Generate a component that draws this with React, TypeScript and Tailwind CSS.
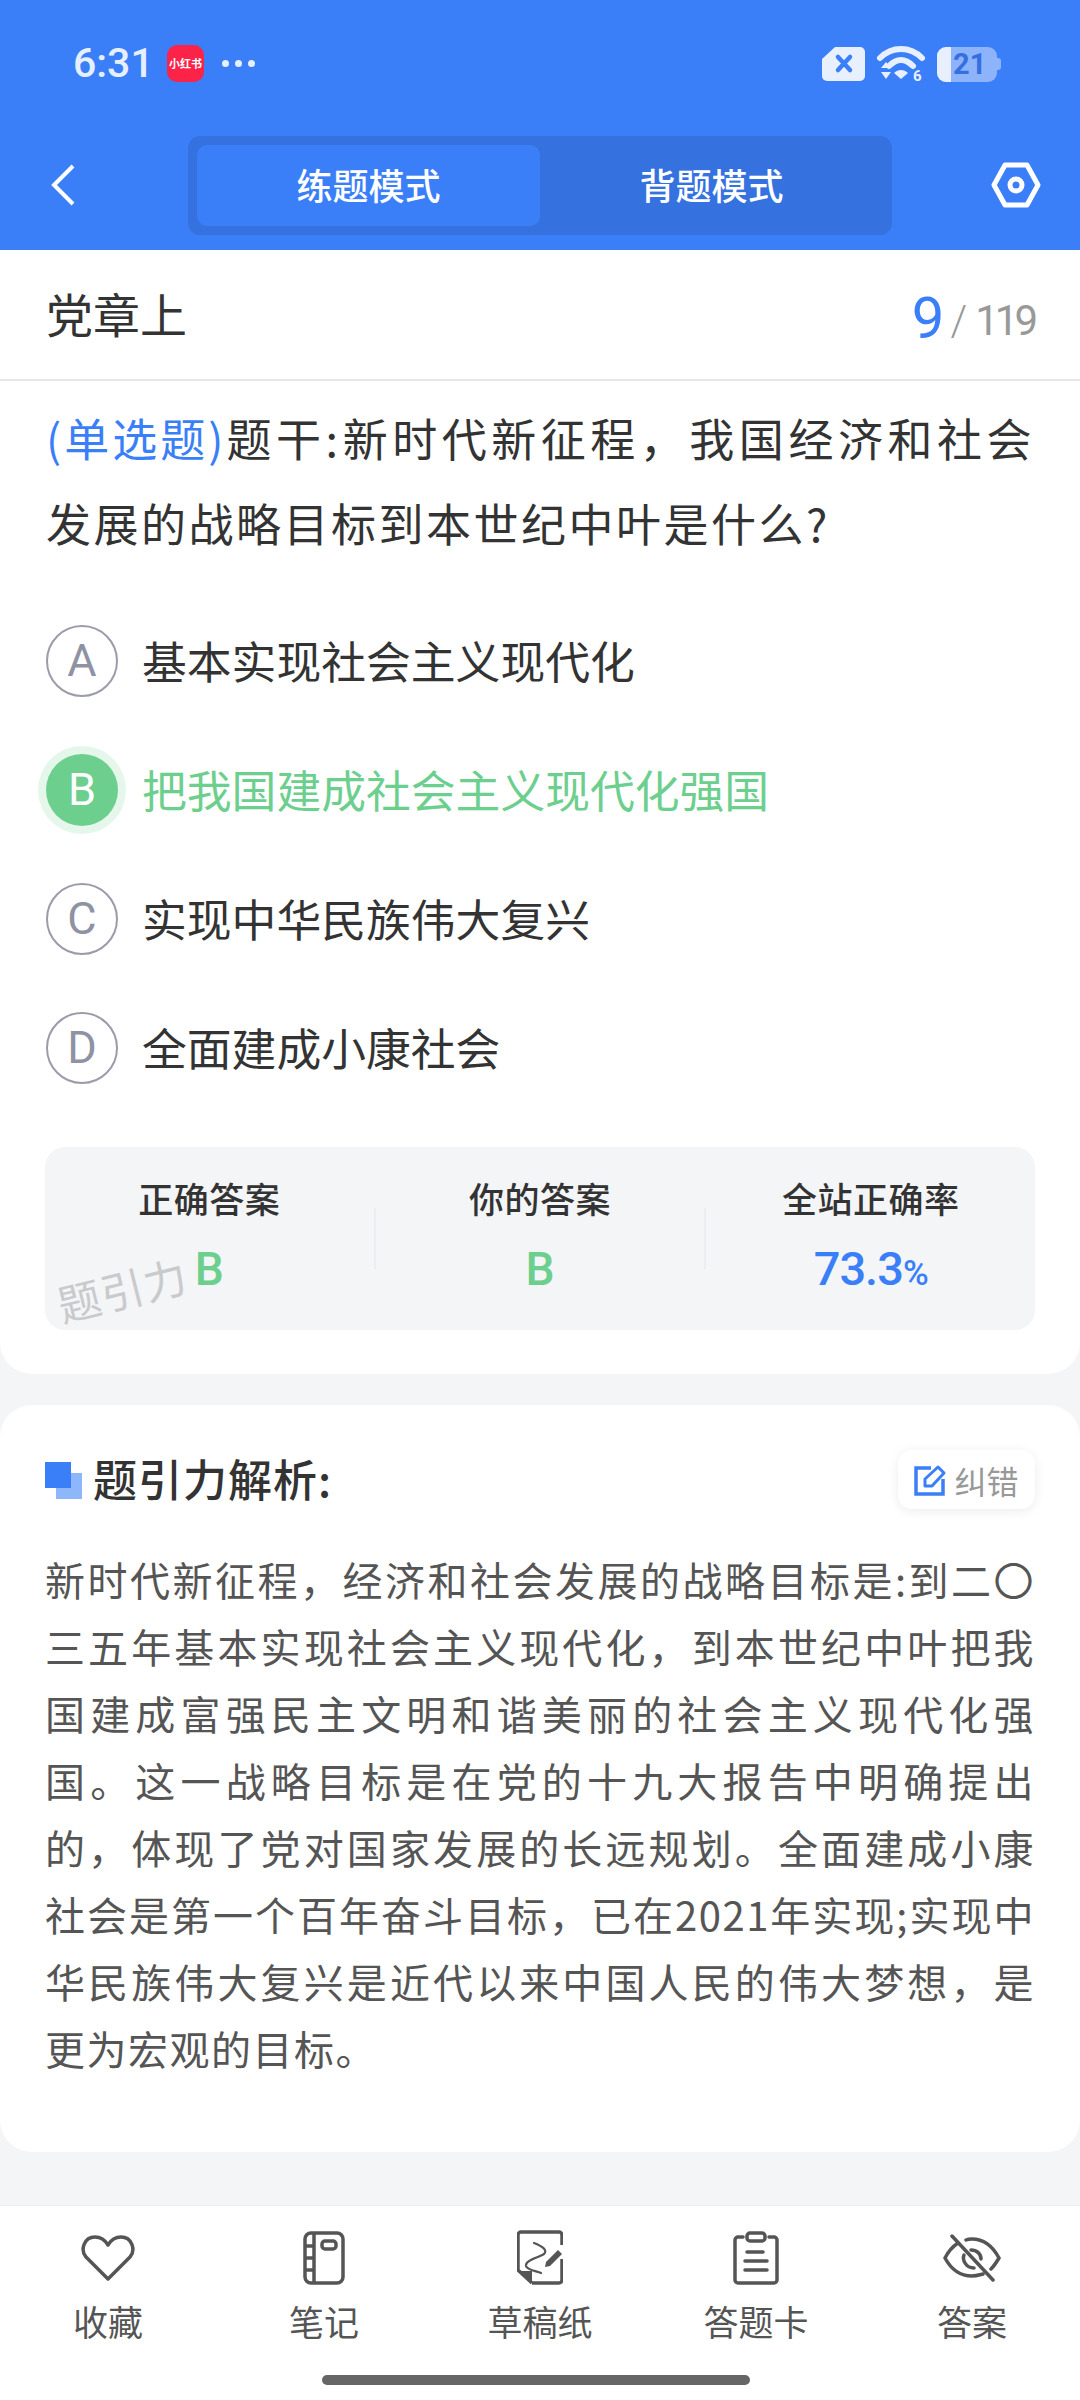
import React from 'react';

const FONT = "font-['Noto_Sans_CJK_SC','Noto_Sans',sans-serif]";

const options = [
  { key: 'A', text: '基本实现社会主义现代化' },
  { key: 'B', text: '把我国建成社会主义现代化强国', correct: true },
  { key: 'C', text: '实现中华民族伟大复兴' },
  { key: 'D', text: '全面建成小康社会' },
];

const analysis =
  '新时代新征程，经济和社会发展的战略目标是:到二〇三五年基本实现社会主义现代化，到本世纪中叶把我国建成富强民主文明和谐美丽的社会主义现代化强国。这一战略目标是在党的十九大报告中明确提出的，体现了党对国家发展的长远规划。全面建成小康社会是第一个百年奋斗目标，已在2021年实现;实现中华民族伟大复兴是近代以来中国人民的伟大梦想，是更为宏观的目标。';

const StatusBar = () => (
  <div className="flex h-[135px] items-start justify-between pl-[73px] pr-[79px] pt-[45px]">
    <div className="flex items-center">
      <span className="w-[94px] font-['Roboto',sans-serif] text-[41px] font-medium leading-[37px] text-[#e6efff]">6:31</span>
      <div className="flex h-[37px] w-[37px] items-center justify-center rounded-[10px] bg-[#fb2348] text-[11px] font-bold leading-none whitespace-nowrap text-white">
        小红书
      </div>
      <div className="ml-[18px] flex gap-[6px]">
        <span className="h-[7px] w-[7px] rounded-full bg-[#e6efff]" />
        <span className="h-[7px] w-[7px] rounded-full bg-[#e6efff]" />
        <span className="h-[7px] w-[7px] rounded-full bg-[#e6efff]" />
      </div>
    </div>
    <div className="flex items-center">
      <svg width="44" height="36" viewBox="0 0 44 36">
        <path d="M13 1H38a5 5 0 0 1 5 5V30a5 5 0 0 1-5 5H5a5 5 0 0 1-5-5V13Z" fill="#e8f0ff" />
        <path d="M16 11l12 13M28 11L16 24" stroke="#3b7ff8" strokeWidth="4.5" strokeLinecap="round" />
      </svg>
      <svg className="ml-[11px] overflow-visible" width="48" height="38" viewBox="0 0 48 38">
        <path d="M3 13C15 1 33 1 45 13" fill="none" stroke="#e8f0ff" strokeWidth="6" strokeLinecap="round" />
        <path d="M12 21C20 13 28 13 36 21" fill="none" stroke="#e8f0ff" strokeWidth="6" strokeLinecap="round" />
        <path d="M17 28C21 24 27 24 31 28L24 34Z" fill="#e8f0ff" />
        <path d="M4 23l5-6 5 6ZM4 27l5 7 5-7Z" fill="#e8f0ff" />
        <text x="36" y="36" fontSize="15" fontWeight="700" fontFamily="Roboto" fill="#e8f0ff">6</text>
      </svg>
      <div className="relative ml-[12px] flex h-[35px] w-[60px] overflow-hidden rounded-[9px] bg-[#8db3fb]">
        <div className="h-full w-[14px] bg-[#e8f0ff]" />
        <span className="ml-[2px] font-['Roboto',sans-serif] text-[29px] font-bold leading-[35px] text-[#3470df]">21</span>
      </div>
      <div className="h-[12px] w-[4px] rounded-r-[3px] bg-[#8db3fb]" />
    </div>
  </div>
);

const Header = () => (
  <div className="h-[250px] bg-[#3b7ff8]">
    <StatusBar />
    <div className="flex h-[100px] items-center justify-between pl-[50px] pr-[39px]">
      <svg width="26" height="42" viewBox="0 0 26 42" fill="none" stroke="white" strokeWidth="4">
        <path d="M23 2 4 21l19 19" />
      </svg>
      <div className="ml-[112px] flex h-[99px] w-[704px] rounded-[12px] bg-[#3571df] p-[9px]">
        <div className="flex w-[343px] items-center justify-center rounded-[10px] bg-[#3b7ff8] pb-[3px] text-[36px] font-medium text-white">练题模式</div>
        <div className="flex flex-1 items-center justify-center pb-[3px] text-[36px] font-medium text-white">背题模式</div>
      </div>
      <svg className="ml-auto" width="50" height="46" viewBox="0 0 50 46" fill="none" stroke="white" strokeWidth="5">
        <path d="M14 3H36L47 23 36 43H14L3 23Z" strokeLinejoin="round" />
        <circle cx="25" cy="23" r="6" />
      </svg>
    </div>
  </div>
);

const Stat = ({ label, children }: { label: string; children: React.ReactNode }) => (
  <div className="flex flex-1 flex-col items-center">
    <span className="text-[35px] font-medium leading-[44px] tracking-[0.5px] text-[#333]">{label}</span>
    <span className="mt-[24px] font-['Roboto',sans-serif] text-[46px] font-medium leading-[50px]">{children}</span>
  </div>
);

const QuestionCard = () => (
  <div className="rounded-b-[32px] bg-white pb-[44px]">
    <div className="flex h-[131px] items-center justify-between border-b-2 border-[#e5e6e8] pb-[5px] pl-[46px] pr-[46px]">
      <span className="text-[47px] leading-none text-[#333]">党章上</span>
      <span className="mt-[6px] flex items-baseline font-['Roboto',sans-serif]">
        <span className="translate-y-[3px] text-[58px] leading-none tracking-[-2px] text-[#3b7ff8]">9</span>
        <span className="ml-[8px] text-[42px] font-light leading-none text-[#999]">/</span>
        <span className="ml-[8px] text-[42px] leading-none tracking-[-4px] text-[#999]">119</span>
      </span>
    </div>
    <p className="ml-[46px] mr-[46px] mt-[14px] text-justify text-[45px] leading-[85px] tracking-[2.5px] text-[#333]">
      <span className="tracking-[1px] text-[#3b7ff8]">(单选题)</span>题干:新时代新征程，我国经济和社会发展的战略目标到本世纪中叶是什么?
    </p>
    <div className="mt-[60px] flex flex-col gap-[57px] px-[46px]">
      {options.map((o) => (
        <div key={o.key} className="flex h-[72px] items-center">
          <div
            className={
              o.correct
                ? 'flex h-[72px] w-[72px] items-center justify-center rounded-full bg-[#6dcf8e] text-[45px] text-white shadow-[0_0_0_8px_#e5f7eb]'
                : 'flex h-[72px] w-[72px] items-center justify-center rounded-full border-2 border-[#9a9caa] text-[45px] text-[#8f92a3]'
            }
          >
            <span className="font-['Roboto',sans-serif]">{o.key}</span>
          </div>
          <span className={o.correct ? 'ml-[24px] pb-[2px] text-[44.8px] text-[#6dcf8e]' : 'ml-[24px] pb-[2px] text-[44.8px] text-[#333]'}>{o.text}</span>
        </div>
      ))}
    </div>
    <div className="relative mx-[45px] mt-[63px] flex h-[183px] rounded-[20px] bg-[#f4f5f7] pt-[29px]">
      <Stat label="正确答案"><span className="text-[#6dcf8e]">B</span></Stat>
      <div className="mt-[32px] h-[61px] w-[2px] bg-[#ebedf0]" />
      <Stat label="你的答案"><span className="text-[#6dcf8e]">B</span></Stat>
      <div className="mt-[32px] h-[61px] w-[2px] bg-[#ebedf0]" />
      <Stat label="全站正确率">
        <span className="text-[47px] tracking-[-1px] text-[#3b7ff8]">73.3<span className="text-[35px]">%</span></span>
      </Stat>
      <span className="absolute left-[11px] top-[120px] -rotate-[14deg] text-[43px] leading-none tracking-[1px] text-[#c9cacc]">题引力</span>
    </div>
  </div>
);

const AnalysisCard = () => (
  <div className="mt-[31px] h-[747px] rounded-[32px] bg-white px-[45px] pt-[42px]">
    <div className="flex items-center justify-between">
      <div className="flex items-center">
        <div className="relative mt-[4px] h-[37px] w-[37px]">
          <div className="absolute bottom-0 right-0 h-[26px] w-[26px] bg-[#8db6fb]" />
          <div className="absolute left-0 top-0 h-[26px] w-[26px] bg-[#3b7ff8]" />
        </div>
        <span className="ml-[11px] text-[44px] font-medium leading-none tracking-[1px] text-[#333]">题引力解析:</span>
      </div>
      <div className="mt-[3px] flex h-[59px] w-[137px] items-center justify-center rounded-[14px] bg-white shadow-[0_2px_12px_rgba(0,0,0,0.08)]">
        <svg width="34" height="32" viewBox="0 0 34 32" fill="none" stroke="#3b7ff8" strokeWidth="3.5">
          <path d="M17 4H2V30H29V15" />
          <path d="M11 22V15L24 3l6 6L18 22Z" strokeLinejoin="round" strokeWidth="3" />
        </svg>
        <span className="ml-[6px] text-[32px] leading-none text-[#999]">纠错</span>
      </div>
    </div>
    <p className="mt-[37px] text-justify text-[40px] leading-[67px] tracking-[1.5px] text-[#555]">{analysis}</p>
  </div>
);

const NavItem = ({ label, children }: { label: string; children: React.ReactNode }) => (
  <div className="flex flex-col items-center">
    <div className="flex h-[58px] items-center justify-center">{children}</div>
    <span className="mt-[14px] text-[35px] leading-[40px] text-[#555]">{label}</span>
  </div>
);

const BottomNav = () => (
  <div className="absolute bottom-0 left-0 h-[195px] w-full border-t border-[#eceef0] bg-white">
    <div className="grid grid-cols-5 pt-[23px]">
      <NavItem label="收藏">
        <svg width="54" height="48" viewBox="0 0 54 48" fill="none" stroke="#555" strokeWidth="3.5" strokeLinejoin="round">
          <path d="M27 45 5 23C-1 16 3 3 14 3c6 0 10 3 13 8 3-5 7-8 13-8 11 0 15 13 9 20Z" />
        </svg>
      </NavItem>
      <NavItem label="笔记">
        <svg width="42" height="54" viewBox="0 0 42 54" fill="none" stroke="#555" strokeWidth="3.5" strokeLinejoin="round">
          <rect x="2" y="2" width="38" height="50" rx="6" />
          <path d="M11 2V52M2 15H11M2 27H11M2 39H11" />
          <rect x="19" y="10" width="14" height="8" rx="3" />
        </svg>
      </NavItem>
      <NavItem label="草稿纸">
        <svg width="46" height="56" viewBox="17 8 46 56" fill="none" stroke="#555" strokeWidth="3.5" strokeLinejoin="round">
          <path d="M32 61H59a3 3 0 0 0 3-3V37M62 23V13a3 3 0 0 0-3-3H21a3 3 0 0 0-3 3V48L32 61" />
          <path d="M20 49H32V61Z" fill="#555" stroke="none" />
          <path d="M34 21C42 24 48 28 44 32C38 36 25 38 26 44C27 48 36 49 41 51" strokeWidth="2.2" strokeLinecap="round" />
          <path d="M45 45 46 40 58 28 62 32 50 44Z" fill="#555" stroke="none" />
        </svg>
      </NavItem>
      <NavItem label="答题卡">
        <svg width="46" height="54" viewBox="0 0 46 54" fill="none" stroke="#555" strokeWidth="3.5" strokeLinecap="round" strokeLinejoin="round">
          <path d="M10 6H5a3 3 0 0 0-3 3V49a3 3 0 0 0 3 3H41a3 3 0 0 0 3-3V9a3 3 0 0 0-3-3H36" />
          <rect x="14" y="2" width="18" height="8" rx="3" />
          <path d="M14 21H30M12 30H34M12 39H34" />
        </svg>
      </NavItem>
      <NavItem label="答案">
        <svg width="58" height="48" viewBox="0 0 58 48" fill="none" stroke="#555" strokeWidth="3.5" strokeLinecap="round">
          <path d="M9 2 50 46" />
          <path d="M15 9C9 13 5 18 2 24c7 13 16 18 27 18 4 0 7-1 11-2M23 6c2-1 4-1 6-1 11 0 20 6 27 19-3 5-5 8-8 11" />
          <path d="M21 21c-2 5 2 13 10 13M28 16c6 0 10 4 10 9" />
        </svg>
      </NavItem>
    </div>
    <div className="absolute bottom-[15px] left-[322px] h-[10px] w-[428px] rounded-full bg-[#666]" />
  </div>
);

export default function App() {
  return (
    <div className={`relative h-[2400px] w-[1080px] overflow-hidden bg-[#f4f5f7] ${FONT}`}>
      <Header />
      <QuestionCard />
      <AnalysisCard />
      <BottomNav />
    </div>
  );
}
